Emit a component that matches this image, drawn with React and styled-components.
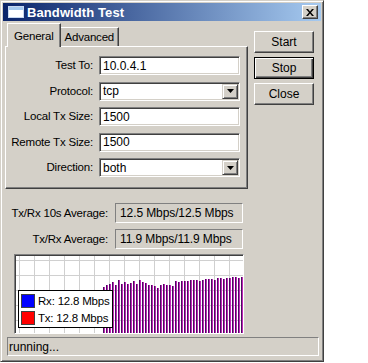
import React from 'react';
import styled, { createGlobalStyle } from 'styled-components';

const GlobalStyle = createGlobalStyle`
  html, body {
    margin: 0;
    padding: 0;
    background: #ffffff;
  }
  body {
    font-family: "Liberation Sans", Arial, sans-serif;
    font-size: 11px;
    color: #000;
  }
`;

const Window = styled.div`
  box-sizing: border-box;
  width: 324px;
  height: 362px;
  background: #d4d0c8;
  border: 1px solid;
  border-color: #d4d0c8 #404040 #404040 #d4d0c8;
  box-shadow: inset 1px 1px #ffffff, inset -1px -1px #808080;
  padding: 2px;
  display: flex;
  flex-direction: column;
`;

const TitleBar = styled.div`
  height: 18px;
  background: linear-gradient(to right, #0a246a, #a6caf0);
  display: flex;
  align-items: center;
  padding: 0 3px 0 5px;
  color: #fff;
  font-weight: bold;
  font-size: 13px;
`;

const TitleText = styled.span`
  margin-left: 3px;
  flex: 1;
  letter-spacing: 0.1px;
`;

const CloseButton = styled.div`
  box-sizing: border-box;
  width: 16px;
  height: 14px;
  background: #d4d0c8;
  border: 1px solid;
  border-color: #fff #404040 #404040 #fff;
  box-shadow: inset -1px -1px #808080;
  display: flex;
  align-items: center;
  justify-content: center;
`;

const Main = styled.div`
  display: flex;
  flex: 1;
  padding: 1px 0 0 2px;
`;

const LeftColumn = styled.div`
  width: 243px;
  display: flex;
  flex-direction: column;
`;

const TabRow = styled.div`
  display: flex;
  align-items: flex-end;
  height: 24px;
  padding-left: 2px;
`;

const Tab = styled.div`
  box-sizing: border-box;
  height: ${p => (p.$active ? 24 : 19)}px;
  padding: 0 ${p => (p.$active ? 6 : 4)}px;
  display: flex;
  align-items: center;
  font-size: 11.5px;
  letter-spacing: -0.2px;
  border-top: 1px solid #fff;
  border-left: 1px solid #fff;
  border-right: 1px solid #404040;
  box-shadow: inset -1px 0 #808080;
  margin-bottom: ${p => (p.$active ? -1 : 0)}px;
  position: relative;
  z-index: ${p => (p.$active ? 2 : 1)};
  background: ${p => (p.$active ? '#d4d0c8' : '#ccc8c0')};
  margin-left: ${p => (p.$active ? 0 : -1)}px;
`;

const Panel = styled.div`
  box-sizing: border-box;
  height: 143px;
  border: 1px solid;
  border-color: #fff #404040 #404040 #fff;
  box-shadow: inset -1px -1px #808080;
  padding: 9px 0 0 0;
  display: grid;
  grid-template-columns: 87px 141px;
  column-gap: 6px;
  row-gap: 7px;
  grid-auto-rows: 18.5px;
  align-content: start;
`;

const Label = styled.div`
  font-size: 11.5px;
  letter-spacing: -0.2px;
  text-align: right;
  align-self: center;
  white-space: nowrap;
`;

const Input = styled.div`
  box-sizing: border-box;
  height: 19px;
  background: #fff;
  border: 1px solid;
  border-color: #808080 #fff #fff #808080;
  box-shadow: inset 1px 1px #404040, inset -1px -1px #d4d0c8;
  display: flex;
  align-items: center;
  padding: 0 2px 0 3px;
  font-size: 12px;
`;

const InputText = styled.span`
  flex: 1;
`;

const DropButton = styled.div`
  box-sizing: border-box;
  width: 16px;
  height: 15px;
  margin-right: -1px;
  background: #d4d0c8;
  border: 1px solid;
  border-color: #d4d0c8 #404040 #404040 #d4d0c8;
  box-shadow: inset 1px 1px #fff, inset -1px -1px #808080;
  display: flex;
  align-items: center;
  justify-content: center;
`;

const Stats = styled.div`
  display: grid;
  grid-template-columns: 103px 128px;
  column-gap: 7px;
  row-gap: 6px;
  grid-auto-rows: 20px;
  padding-top: 14px;
`;

const ValueBox = styled.div`
  box-sizing: border-box;
  height: 20px;
  border: 1px solid;
  border-color: #808080 #fff #fff #808080;
  display: flex;
  align-items: center;
  padding-left: 4px;
  font-size: 12px;
  letter-spacing: -0.1px;
`;

const ChartBox = styled.div`
  position: relative;
  box-sizing: border-box;
  width: 230px;
  height: 80px;
  margin: 5px 0 0 9px;
  background: #fff;
  border: 1px solid;
  border-color: #808080 #fff #fff #808080;
  box-shadow: inset 1px 1px #404040;
  overflow: hidden;
`;

const Legend = styled.div`
  position: absolute;
  left: 3px;
  top: 35px;
  box-sizing: border-box;
  width: 95px;
  height: 38px;
  background: #fff;
  border: 1px solid #000;
  padding: 2px 0 0 2px;
  display: flex;
  flex-direction: column;
  gap: 2px;
`;

const LegendItem = styled.div`
  display: flex;
  align-items: center;
  gap: 3px;
  font-size: 11.5px;
  letter-spacing: -0.2px;
  white-space: nowrap;
  height: 15px;
`;

const Swatch = styled.div`
  flex: none;
  box-sizing: border-box;
  width: 14px;
  height: 14px;
  background: ${p => p.$color};
  border: 1px solid #404040;
`;

const RightColumn = styled.div`
  display: flex;
  flex-direction: column;
  gap: 4px;
  padding: 9px 0 0 6px;
`;

const Button = styled.div`
  box-sizing: border-box;
  width: 60px;
  height: 22px;
  display: flex;
  align-items: center;
  justify-content: center;
  font-size: 12px;
  border: 1px solid;
  border-color: ${p => (p.$focused ? '#000' : '#fff #404040 #404040 #fff')};
  box-shadow: ${p =>
    p.$focused
      ? 'inset 1px 1px #fff, inset -1px -1px #404040, inset -2px -2px #808080'
      : 'inset -1px -1px #808080'};
`;

const StatusBar = styled.div`
  box-sizing: border-box;
  height: 19px;
  margin: 0 2px 3px 4px;
  border: 1px solid;
  border-color: #808080 #fff #fff #808080;
  display: flex;
  align-items: center;
  padding-left: 1px;
  font-size: 12px;
`;

const heights = [
  47, 49, 50, 52, 49, 54, 50, 52, 50, 51, 53, 50, 54, 52, 51, 49, 49, 48, 46,
  49, 50, 49, 49, 48, 53, 52, 53, 53, 53, 54, 54, 54, 53, 54, 55, 55, 55, 54,
  56, 56, 55, 56, 56, 57, 57, 56, 57,
];

const WindowIcon = () => (
  <svg width="16" height="12" viewBox="0 0 16 12">
    <rect x="0.5" y="0.5" width="15" height="11" fill="#ffffff" stroke="#c8d8f0" />
    <rect x="1" y="1" width="14" height="3" fill="#a6caf0" />
  </svg>
);

const CloseGlyph = () => (
  <svg width="8" height="7" viewBox="0 0 8 7">
    <path d="M0 0h2l2 2.5L6 0h2L5 3.5 8 7H6L4 4.5 2 7H0l3-3.5z" fill="#000" />
  </svg>
);

const DropArrow = () => (
  <svg width="7" height="4" viewBox="0 0 7 4">
    <path d="M0 0h7L3.5 4z" fill="#000" />
  </svg>
);

const Graph = () => {
  const cols = [];
  for (let x = 3; x < 230; x += 15) cols.push(x);
  const rows = [];
  for (let y = 4; y < 80; y += 15) rows.push(y);
  return (
    <svg width="228" height="78" style={{ position: 'absolute', left: 1, top: 1 }}>
      {cols.map(x => (
        <line key={'c' + x} x1={x + 0.5} y1="0" x2={x + 0.5} y2="78" stroke="#d0d0d0" />
      ))}
      {rows.map(y => (
        <line key={'r' + y} x1="0" y1={y + 0.5} x2="228" y2={y + 0.5} stroke="#d0d0d0" />
      ))}
      {heights.map((h, i) => {
        const x = 87 + i * 3;
        return (
          <g key={i}>
            <rect x={x} y={78 - h} width="1" height={h} fill="#4a0a60" />
            <rect x={x + 1} y={78 - h} width="1" height={h} fill="#c028b8" />
          </g>
        );
      })}
    </svg>
  );
};

const Field = ({ label, value, select }) => (
  <>
    <Label>{label}</Label>
    <Input>
      <InputText>{value}</InputText>
      {select && (
        <DropButton>
          <DropArrow />
        </DropButton>
      )}
    </Input>
  </>
);

const App = () => {
  return (
    <>
      <GlobalStyle />
      <Window>
        <TitleBar>
          <WindowIcon />
          <TitleText>Bandwidth Test</TitleText>
          <CloseButton>
            <CloseGlyph />
          </CloseButton>
        </TitleBar>

        <Main>
          <LeftColumn>
            <TabRow>
              <Tab $active>General</Tab>
              <Tab>Advanced</Tab>
            </TabRow>
            <Panel>
              <Field label="Test To:" value="10.0.4.1" />
              <Field label="Protocol:" value="tcp" select />
              <Field label="Local Tx Size:" value="1500" />
              <Field label="Remote Tx Size:" value="1500" />
              <Field label="Direction:" value="both" select />
            </Panel>

            <Stats>
              <Label>Tx/Rx 10s Average:</Label>
              <ValueBox>12.5 Mbps/12.5 Mbps</ValueBox>
              <Label>Tx/Rx Average:</Label>
              <ValueBox>11.9 Mbps/11.9 Mbps</ValueBox>
            </Stats>

            <ChartBox>
              <Graph />
              <Legend>
                <LegendItem>
                  <Swatch $color="#0000ff" />
                  Rx: 12.8 Mbps
                </LegendItem>
                <LegendItem>
                  <Swatch $color="#ff0000" />
                  Tx: 12.8 Mbps
                </LegendItem>
              </Legend>
            </ChartBox>
          </LeftColumn>

          <RightColumn>
            <Button>Start</Button>
            <Button $focused>Stop</Button>
            <Button>Close</Button>
          </RightColumn>
        </Main>

        <StatusBar>running...</StatusBar>
      </Window>
    </>
  );
};

export default App;
